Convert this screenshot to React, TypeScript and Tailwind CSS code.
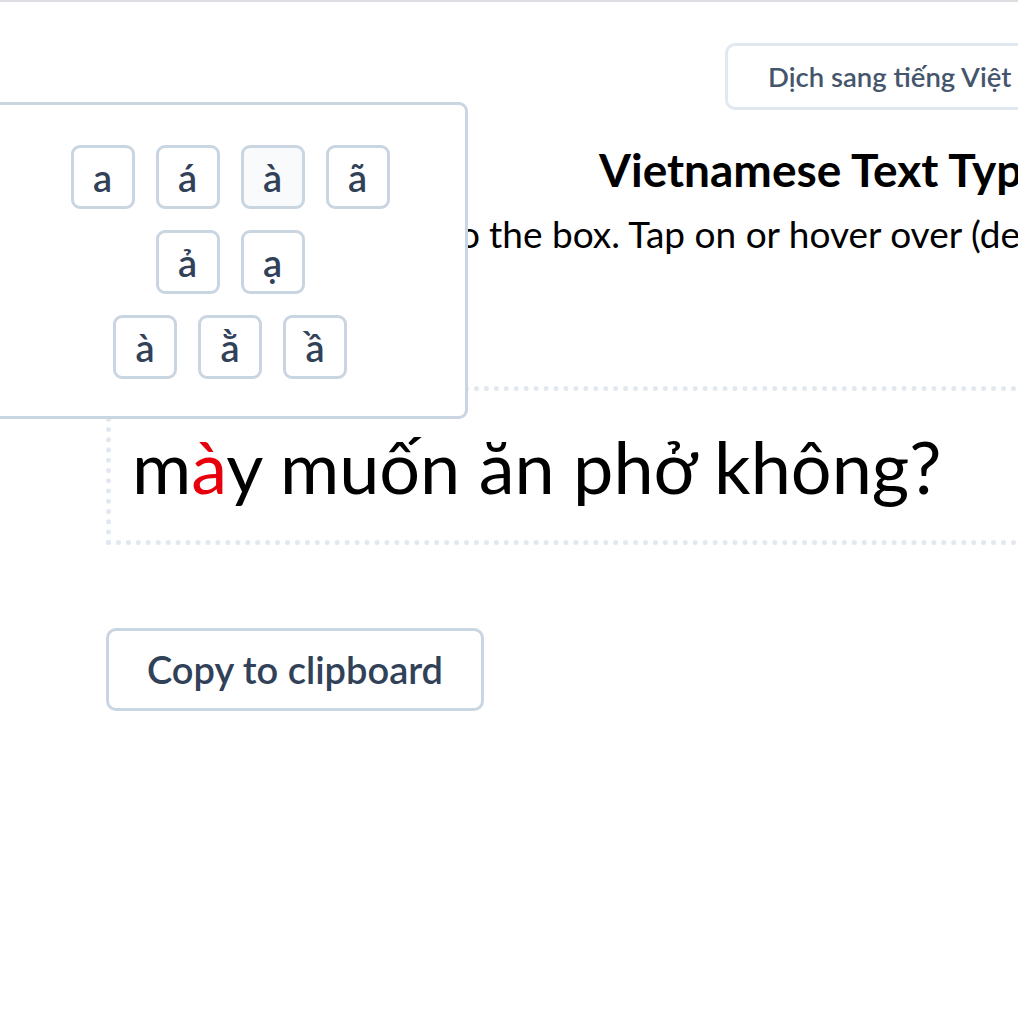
import React from "react";

const font = { fontFamily: "Lato, 'Noto Sans', sans-serif" };

const rows = [
  ["a", "á", "à", "ã"],
  ["ả", "ạ"],
  ["à", "ằ", "ầ"],
];

export default function App() {
  return (
    <div
      className="relative w-[1018px] h-[1018px] overflow-hidden bg-white border-t-2 border-[#dddde2] text-black"
      style={font}
    >
      {/* translate toggle */}
      <div className="pt-[41px]">
        <button className="ml-[725px] h-[67px] px-[40px] flex items-center border-[3px] border-slate-200 rounded-[10px] whitespace-nowrap text-[27.5px] font-semibold text-slate-600">
          Dịch sang tiếng Việt
        </button>
      </div>

      {/* heading */}
      <h1 className="ml-[599px] mt-[30px] text-[46px] leading-[60px] font-bold whitespace-nowrap">
        Vietnamese Text Typer
      </h1>
      <p className="flex mt-[11px] text-[37px] leading-[46px] whitespace-nowrap">
        <span className="w-[480px] shrink-0 text-right">Type or paste text into</span>
        <span className="pl-[9px]">the box. Tap on or hover over (desktop) a vowel to change it.</span>
      </p>

      {/* editable text */}
      <div className="ml-[106px] mt-[129px] w-[1100px] h-[159px] border-[5px] border-dotted border-[#e2e8f0] pl-[21px] flex items-center">
        <span className="text-[72px] leading-none whitespace-nowrap">
          m<span className="text-red-600">à</span>y muốn ăn phở không?
        </span>
      </div>

      <button className="ml-[106px] mt-[83px] w-[378px] h-[83px] border-[3px] border-slate-300 rounded-[10px] text-[38px] font-semibold text-slate-700 flex items-center justify-center">
        Copy to clipboard
      </button>

      {/* vowel picker popover */}
      <div className="absolute left-[-8px] top-[100px] w-[476px] h-[317px] bg-white border-[3px] border-slate-300 rounded-[9px] flex flex-col items-center pt-[40px] gap-[21px]">
        {rows.map((row, i) => (
          <div key={i} className="flex gap-[21px]">
            {row.map((ch, j) => (
              <button
                key={j}
                className={
                  "w-[64px] h-[64px] border-[3px] border-slate-300 rounded-[9px] flex items-center justify-center text-[38px] leading-none font-semibold text-slate-700 " +
                  (i === 0 && j === 2 ? "bg-slate-50" : "bg-white")
                }
              >
                {ch}
              </button>
            ))}
          </div>
        ))}
      </div>
    </div>
  );
}
